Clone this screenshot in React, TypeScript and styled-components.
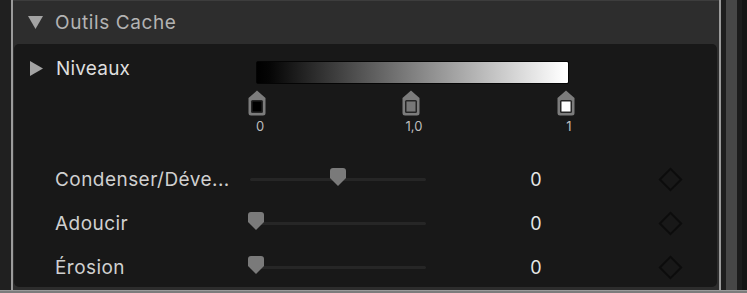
import React from "react";
import styled, { createGlobalStyle } from "styled-components";

const GlobalStyle = createGlobalStyle`
  html, body {
    margin: 0;
    padding: 0;
    background: #1c1c1c;
    overflow: hidden;
  }
  body {
    font-family: Inter, "Helvetica Neue", "Liberation Sans", sans-serif;
    -webkit-font-smoothing: antialiased;
  }
`;

const Frame = styled.div`
  width: 747px;
  height: 293px;
  display: flex;
  flex-direction: column;
`;

const Body = styled.div`
  display: flex;
  height: 290px;
`;

const BottomRule = styled.div`
  height: 3px;
  background: #7c7c7c;
  border-top: 1px solid #9a9a9a;
  box-sizing: border-box;
`;

const Gutter = styled.div`
  width: 11px;
  background: #202020;
`;

const Edge = styled.div`
  width: 2px;
  background: #9b9b9b;
`;

const Main = styled.div`
  flex: 1;
  display: flex;
  flex-direction: column;
  background: #2d2d2d;
`;

// barre de défilement à droite
const Rail = styled.div`
  width: 26px;
  display: flex;
  background: #141414;
`;
const RailPart = styled.div<{ $w: number; $c: string }>`
  width: ${(p) => p.$w}px;
  background: ${(p) => p.$c};
`;

const Header = styled.div`
  height: 44px;
  display: flex;
  align-items: center;
  border-top: 1px solid #3d3d3d;
  box-sizing: border-box;
  padding-left: 15px;
  gap: 12px;
  color: #b3b3b3;
  font-size: 19px;
  letter-spacing: 0.6px;
`;

const Panel = styled.div`
  height: 243px;
  margin: 0 2px 0 1px;
  background: #181818;
  border-radius: 5px;
  overflow: hidden;
`;

const Levels = styled.div`
  display: grid;
  grid-template-columns: 242px 313px;
  padding-top: 12px;
  height: 113px;
  box-sizing: border-box;
`;

const LevelsTitle = styled.div`
  display: flex;
  align-items: center;
  gap: 13px;
  height: 24px;
  padding-left: 16px;
  color: #dedede;
  font-size: 19px;
  letter-spacing: 0.2px;
`;

const RampColumn = styled.div`
  padding-top: 5px;
`;

const Ramp = styled.div`
  height: 23px;
  border-radius: 2px;
  border: 1px solid #050505;
  box-sizing: border-box;
  background: linear-gradient(to right, #000 0%, #050505 4%, #808080 50%, #fff 99%);
`;

const MarkerTrack = styled.div`
  position: relative;
  height: 46px;
`;

const Marker = styled.div<{ $pos: number }>`
  position: absolute;
  top: 6px;
  left: ${(p) => p.$pos}px;
  width: 18px;
  display: flex;
  flex-direction: column;
  align-items: center;
`;

const MarkerLabel = styled.span`
  margin-top: 3px;
  margin-left: 6px;
  font-size: 13px;
  color: #bdbdbd;
  line-height: 14px;
  white-space: nowrap;
`;

const ParamRow = styled.div`
  display: grid;
  grid-template-columns: 195px 176px 220px 48px;
  align-items: center;
  height: 44px;
  padding-left: 41px;
`;

const Label = styled.span`
  color: #d0d0d0;
  font-size: 19px;
  letter-spacing: 0.45px;
  white-space: nowrap;
`;

const Slider = styled.div`
  position: relative;
  height: 3px;
  background: #262626;
  border-radius: 2px;
`;

const Thumb = styled.svg<{ $pct: number }>`
  position: absolute;
  top: -10px;
  left: calc(${(p) => p.$pct} * (100% - 12px) - 2px);
`;

const Value = styled.span`
  text-align: center;
  color: #e6e6e6;
  font-size: 18px;
`;

const KeyframeCell = styled.div`
  display: flex;
  justify-content: center;
`;

const Diamond = styled.div`
  width: 13px;
  height: 13px;
  border: 2px solid #0c0c0c;
  transform: rotate(45deg);
`;

const TriangleDown = () => (
  <svg width="15" height="13" viewBox="0 0 15 13">
    <path d="M0 0 H15 L7.5 13 Z" fill="#a3a3a3" />
  </svg>
);

const TriangleRight = () => (
  <svg width="13" height="15" viewBox="0 0 13 15">
    <path d="M0 0 L13 7.5 L0 15 Z" fill="#a3a3a3" />
  </svg>
);

const LevelMarker: React.FC<{ fill: string; label: string; pos: number }> = ({ fill, label, pos }) => (
  <Marker $pos={pos}>
    <svg width="18" height="26" viewBox="0 0 18 26">
      <path d="M9 0.5 L17.5 8 V23 Q17.5 25.5 15 25.5 H3 Q0.5 25.5 0.5 23 V8 Z" fill="#7c7c7c" />
      <rect x="3" y="10" width="12" height="13" rx="1.5" fill="#262626" />
      <rect x="4.5" y="11.5" width="9" height="10" fill={fill} />
    </svg>
    <MarkerLabel>{label}</MarkerLabel>
  </Marker>
);

const params = [
  { label: "Condenser/Déve...", pct: 0.5, value: "0" },
  { label: "Adoucir", pct: 0, value: "0" },
  { label: "Érosion", pct: 0, value: "0" },
];

const App: React.FC = () => {
  return (
    <>
      <GlobalStyle />
      <Frame>
        <Body>
          <Gutter />
          <Edge />
          <Main>
            <Header>
              <TriangleDown />
              <span>Outils Cache</span>
            </Header>
            <Panel>
              <Levels>
                <LevelsTitle>
                  <TriangleRight />
                  <span>Niveaux</span>
                </LevelsTitle>
                <RampColumn>
                  <Ramp />
                  <MarkerTrack>
                    <LevelMarker fill="#000" label="0" pos={-8} />
                    <LevelMarker fill="#777" label="1,0" pos={146} />
                    <LevelMarker fill="#fff" label="1" pos={301} />
                  </MarkerTrack>
                </RampColumn>
              </Levels>
              {params.map((p) => (
                <ParamRow key={p.label}>
                  <Label>{p.label}</Label>
                  <Slider>
                    <Thumb $pct={p.pct} width="16" height="18" viewBox="0 0 16 18">
                      <path d="M3 0 H13 Q16 0 16 3 V10 L8 18 L0 10 V3 Q0 0 3 0 Z" fill="#7a7a7a" />
                    </Thumb>
                  </Slider>
                  <Value>{p.value}</Value>
                  <KeyframeCell>
                    <Diamond />
                  </KeyframeCell>
                </ParamRow>
              ))}
            </Panel>
          </Main>
          <Edge />
          <Rail>
            <RailPart $w={5} $c="#1e1e1e" />
            <RailPart $w={11} $c="#474747" />
            <RailPart $w={5} $c="#1c1c1c" />
          </Rail>
        </Body>
        <BottomRule />
      </Frame>
    </>
  );
};

export default App;
